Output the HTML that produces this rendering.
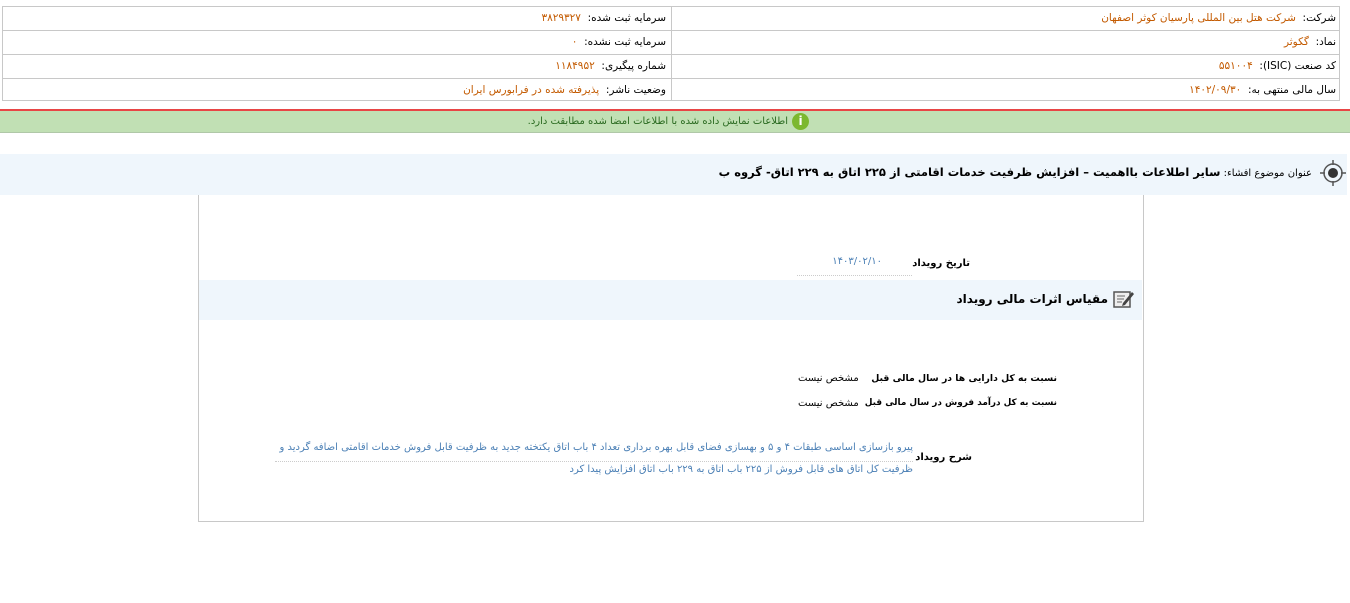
<!DOCTYPE html>
<html><head><meta charset="utf-8"><style>
body{margin:0;width:1350px;height:603px;background:#fff;position:relative;overflow:hidden;font-family:"DejaVu Sans","Noto Sans CJK SC",sans-serif;font-size:10.5px;color:#000}
.a{position:absolute;white-space:nowrap;direction:rtl}
.o{color:#c35a00}
.b{font-weight:bold;font-size:10px}
.bl{color:#4a7fb5}
</style></head><body>
<div style="position:absolute;left:2px;top:6px;width:1338px;height:95px;border:1px solid #c8c8c8;box-sizing:border-box"></div>
<div style="position:absolute;left:671px;top:6px;width:1px;height:95px;background:#c8c8c8"></div>
<div style="position:absolute;left:2px;top:30px;width:1338px;height:1px;background:#c8c8c8"></div>
<div style="position:absolute;left:2px;top:54px;width:1338px;height:1px;background:#c8c8c8"></div>
<div style="position:absolute;left:2px;top:78px;width:1338px;height:1px;background:#c8c8c8"></div>

<div class="a" style="right:14px;top:12px">شرکت:&nbsp; <span class="o">شرکت هتل بین المللی پارسیان کوثر اصفهان</span></div>
<div class="a" style="right:14px;top:36px">نماد:&nbsp; <span class="o">گکوثر</span></div>
<div class="a" style="right:14px;top:60px">کد صنعت (ISIC):&nbsp; <span class="o">۵۵۱۰۰۴</span></div>
<div class="a" style="right:14px;top:84px">سال مالی منتهی به:&nbsp; <span class="o">۱۴۰۲/۰۹/۳۰</span></div>
<div class="a" style="right:684px;top:12px">سرمایه ثبت شده:&nbsp; <span class="o">۳۸۲۹۳۲۷</span></div>
<div class="a" style="right:684px;top:36px">سرمایه ثبت نشده:&nbsp; <span class="o">۰</span></div>
<div class="a" style="right:684px;top:60px">شماره پیگیری:&nbsp; <span class="o">۱۱۸۴۹۵۲</span></div>
<div class="a" style="right:684px;top:84px">وضعیت ناشر:&nbsp; <span class="o">پذیرفته شده در فرابورس ایران</span></div>

<div style="position:absolute;left:0;top:109px;width:1350px;height:2px;background:#e84545"></div>
<div style="position:absolute;left:0;top:111px;width:1350px;height:21px;background:#c1e0b4;border-bottom:1px solid #b0c8a8"></div>
<div style="position:absolute;left:792px;top:113px;width:17px;height:17px;border-radius:50%;background:#7cb82f;color:#fff;font-weight:bold;font-size:12px;text-align:center;line-height:17px">i</div>
<div class="a" style="right:562px;top:116px;color:#2a6a20;font-size:10px">اطلاعات نمایش داده شده با اطلاعات امضا شده مطابقت دارد.</div>

<div style="position:absolute;left:0;top:154px;width:1347px;height:41px;background:#eff6fc"></div>
<svg style="position:absolute;left:1318px;top:158px" width="30" height="30" viewBox="0 0 30 30"><circle cx="15" cy="15" r="9" fill="none" stroke="#555" stroke-width="1.5"/><circle cx="15" cy="15" r="5" fill="#333"/><path d="M15 2v5M15 23v5M2 15h5M23 15h5" stroke="#555" stroke-width="1.5"/></svg>
<div class="a" style="right:38px;top:165px;font-size:11.5px"><span style="font-size:10px">عنوان موضوع افشاء: </span><b>سایر اطلاعات بااهمیت – افزایش ظرفیت خدمات اقامتی از ۲۲۵ اتاق به ۲۲۹ اتاق- گروه ب</b></div>

<div style="position:absolute;left:198px;top:195px;width:946px;height:327px;border:1px solid #c8c8c8;border-top:none;box-sizing:border-box"></div>
<div class="a b" style="right:380px;top:258px">تاریخ رویداد</div>
<div class="a bl" style="right:468px;top:256px;font-size:10px">۱۴۰۳/۰۲/۱۰</div>
<div style="position:absolute;left:797px;top:275px;width:115px;border-top:1px dotted #ccc"></div>

<div style="position:absolute;left:199px;top:280px;width:943px;height:40px;background:#eff6fc"></div>
<svg style="position:absolute;left:1112px;top:288px" width="24" height="22" viewBox="0 0 24 22"><rect x="2" y="4" width="16" height="15" fill="#eee" stroke="#555" stroke-width="1.5"/><path d="M5 8h8M5 11h7M5 14h5" stroke="#666"/><path d="M11 15l9-11 2 2-9 11-3 1z" fill="#444"/></svg>
<div class="a b" style="right:242px;top:292px;font-size:12px">مقیاس اثرات مالی رویداد</div>

<div class="a b" style="right:293px;top:373px;font-size:9.3px">نسبت به کل دارایی ها در سال مالی قبل</div>
<div class="a" style="left:798px;top:373px;font-size:10px">مشخص نیست</div>
<div class="a b" style="right:293px;top:398px;font-size:8.9px">نسبت به کل درآمد فروش در سال مالی قبل</div>
<div class="a" style="left:798px;top:398px;font-size:10px">مشخص نیست</div>

<div class="a b" style="right:378px;top:452px">شرح رویداد</div>
<div class="a bl" style="right:437px;top:442px;font-size:10px">پیرو بازسازی اساسی طبقات ۴ و ۵ و بهسازی فضای قابل بهره برداری تعداد ۴ باب اتاق یکتخته جدید به ظرفیت قابل فروش خدمات اقامتی اضافه گردید و</div>
<div style="position:absolute;left:275px;top:461px;width:638px;border-top:1px dotted #ccc"></div>
<div class="a bl" style="right:437px;top:464px;font-size:10px">ظرفیت کل اتاق های قابل فروش از ۲۲۵ باب اتاق به ۲۲۹ باب اتاق افزایش پیدا کرد</div>
</body></html>
